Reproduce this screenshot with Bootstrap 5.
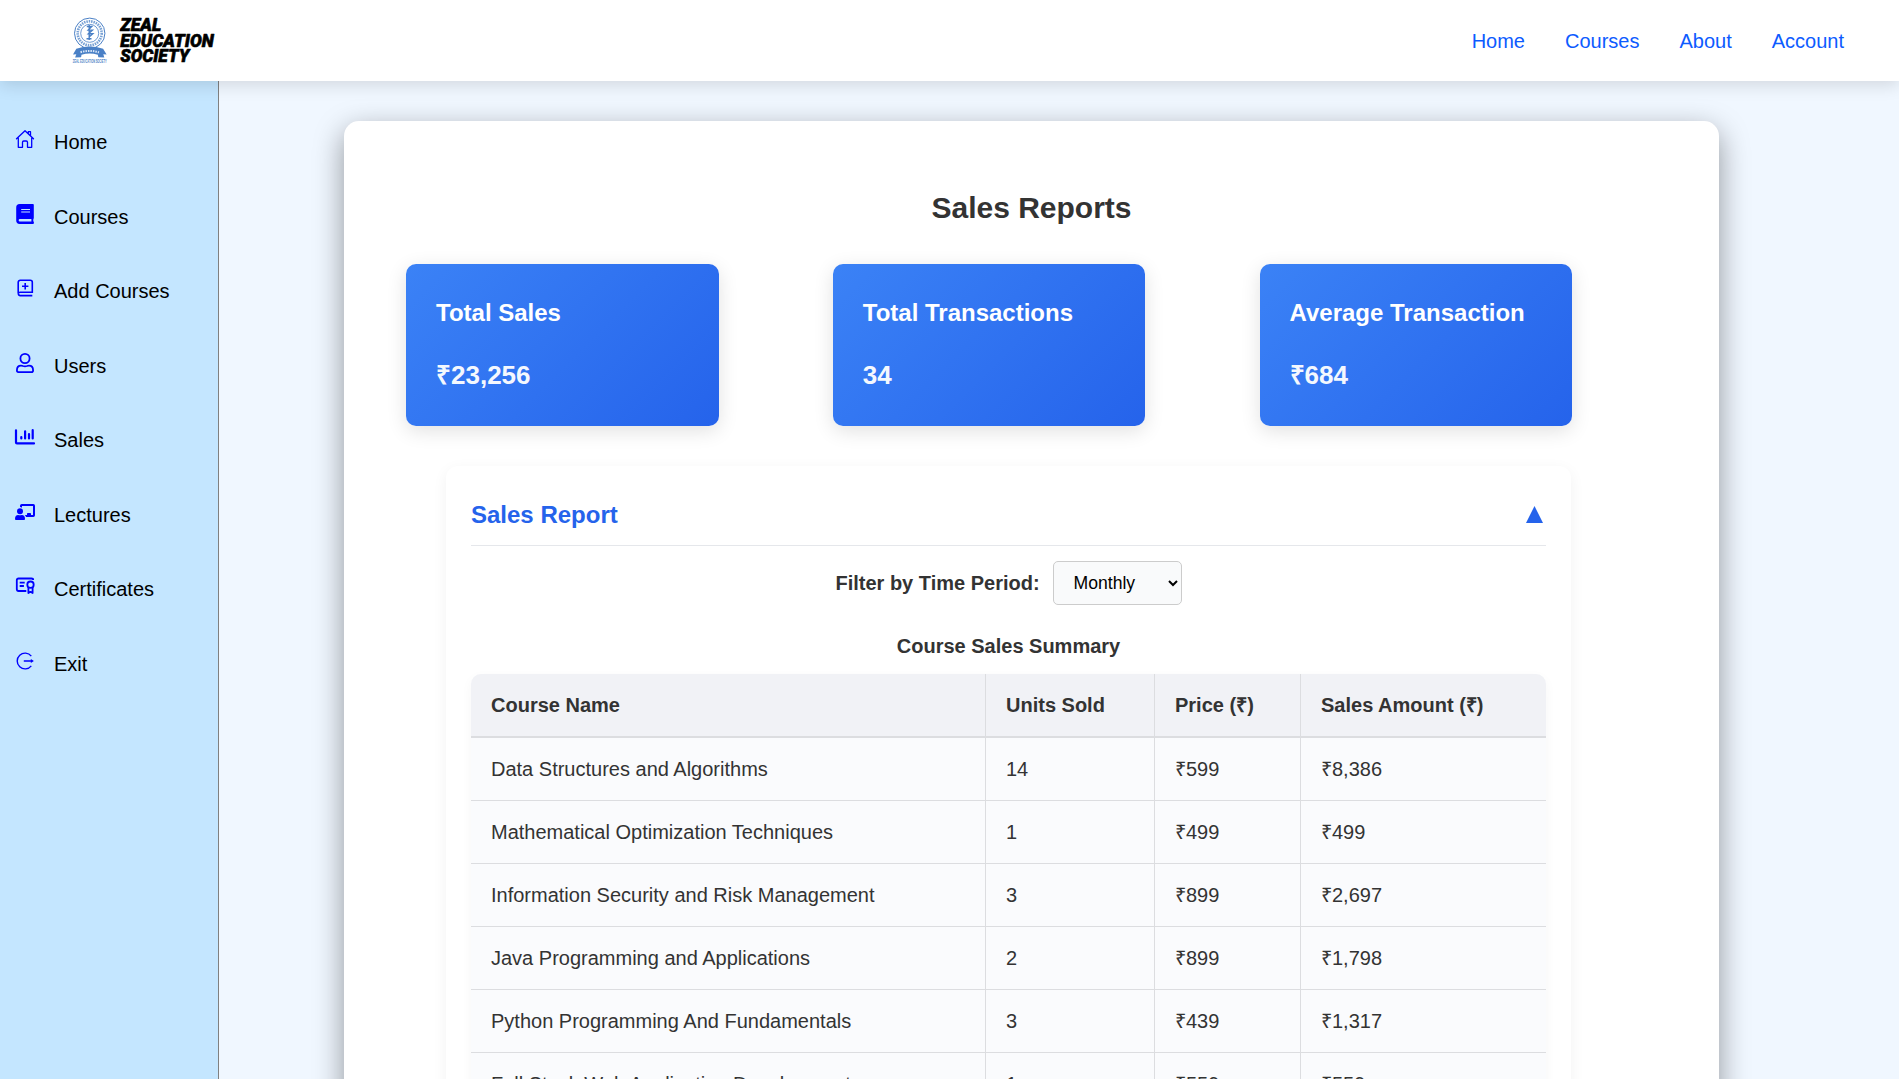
<!DOCTYPE html>
<html lang="en">
<head>
<meta charset="utf-8">
<meta name="viewport" content="width=device-width, initial-scale=1">
<title>Sales Reports</title>
<link href="https://cdn.jsdelivr.net/npm/bootstrap@5.3.0/dist/css/bootstrap.min.css" rel="stylesheet">
<style>
  body { font-family: "Liberation Sans", Arial, sans-serif; font-size: 20px; color: #333; background: #f0f7ff; height: 100vh; overflow: hidden; }
  .top-bar { height: 81px; padding: 0 55px 0 70px; box-shadow: 0 4px 16px rgba(0,0,0,.13); z-index: 5; }
  .top-links { gap: 40px; }
  .top-links .nav-link { color: #0d5bff; padding: 0; }
  .app-body { height: calc(100vh - 81px); overflow: hidden; }
  .side-menu { width: 219px; background: #c4e6ff; border-right: 1px solid #808080; padding-top: 23.8px; }
  .side-menu .nav-link { height: 74.55px; color: #000; padding: 0 0 0 15px; gap: 19px; }
  .side-menu svg { width: 20px; height: 20px; margin-bottom: 6px; color: #00f; flex: none; overflow: visible; }
  .report-sheet { width: 1375px; margin: 40px 0 0 125px; height: 1300px; padding: 70px 147px 0 62px; border-radius: 15px; box-shadow: 0 10px 30px rgba(0,0,0,.4); }
  .sheet-title { font-size: 30px; line-height: 33px; font-weight: 700; padding-left: 85px; margin-bottom: 40px; }
  .stat-tile { width: 312.5px; height: 162px; padding: 34px 30px 0; border-radius: 10px; background: linear-gradient(135deg,#3b82f6,#2563eb); box-shadow: 0 5px 20px rgba(0,0,0,.12); }
  .stat-tile h3 { font-size: 24px; line-height: 30px; font-weight: 700; margin: 0 0 30px; }
  .stat-tile p { font-size: 26px; line-height: 34px; font-weight: 700; opacity: .95; margin: 0; }
  .report-panel { margin: 40px 1px 0 40px; padding: 25px; border-radius: 12px; box-shadow: 0 4px 15px rgba(0,0,0,.055); height: 900px; }
  .panel-head { height: 55px; color: #2563eb; border-bottom: 1px solid #e5e7eb; padding-bottom: 6px; }
  .panel-head h3 { font-size: 24px; font-weight: 700; line-height: 28px; margin: 0; }
  .arrow-up { width: 17px; height: 17px; margin: 0 3px 2px 0; display: block; }
  .filter-row { gap: 13px; margin-top: 15px; height: 44px; }
  .period-pick { height: 44px; width: 129px; font: 17.6px "Liberation Sans", Arial, sans-serif; background: #f9fafb; color: #000; border: 1px solid #ccc; border-radius: 5px; padding: 0 0 0 16px; }
  .summary-title { font-size: 20px; line-height: 24px; font-weight: 700; margin: 29px 0 16px; }
  .sales-wrap { border-radius: 10px; overflow: hidden; box-shadow: 0 4px 12px rgba(0,0,0,.04); }
  .sales-grid { table-layout: fixed; width: 1075px; border-collapse: separate; border-spacing: 0; background: #fafbfd; line-height: 30px; }
  .sales-grid th { height: 64px; background: #f1f2f6; border-bottom: 2px solid #dcdde0; padding: 0 20px; }
  .sales-grid td { height: 63px; border-bottom: 1px solid #dcdde0; padding: 0 20px; }
  .sales-grid th:not(:last-child), .sales-grid td:not(:last-child) { border-right: 1px solid #dcdde0; }
</style>
<script src="https://cdn.jsdelivr.net/npm/bootstrap@5.3.0/dist/js/bootstrap.bundle.min.js"></script>
</head>
<body>
<header class="top-bar bg-white d-flex justify-content-between align-items-center position-relative">
  <svg width="150" height="54" viewBox="0 0 150 54" aria-label="Zeal Education Society">
    <g fill="none" stroke="#4a80c6">
      <circle cx="19.7" cy="19.3" r="15.2" stroke-width="1"/>
      <circle cx="19.7" cy="19.3" r="12" stroke-width="2.6" stroke-dasharray="1.5 .9" opacity=".75"/>
      <circle cx="19.7" cy="19.3" r="9" stroke-width=".8"/>
      <path d="M16.8 12.5h5l-3.6 3.6h4.2l-4 3.6h4.4l-4 3.6M19.2 11v15M16.5 24.8h5" stroke-width="1.4"/>
    </g>
    <path d="M3 40.5l3.3-5.8q13.4-4.3 26.8 0l3.5 5.8-3.3-.2 1 3.1-6-.2-.4-2.4q-8.2-2.4-16.4 0l-.4 2.4-6 .2 1.2-3.1z" fill="#4a80c6"/>
    <path d="M10.5 38.2q9.2-2.5 18.5 0" fill="none" stroke="#d7e5f8" stroke-width="2" stroke-dasharray="1.5 1"/>
    <text x="2.8" y="49.4" font-size="4.8" font-weight="700" fill="#4a80c6" textLength="34" lengthAdjust="spacingAndGlyphs">ZEAL EDUCATION SOCIETY</text>
    <g font-family="Roboto, sans-serif" font-size="17.6" font-weight="900" font-style="italic" fill="#000" stroke="#000" stroke-width=".6" stroke-linejoin="round">
      <text x="50.2" y="17.3" textLength="41" lengthAdjust="spacingAndGlyphs">ZEAL</text>
      <text x="50.2" y="32.9" textLength="93.5" lengthAdjust="spacingAndGlyphs">EDUCATION</text>
      <text x="50.2" y="48.2" textLength="69" lengthAdjust="spacingAndGlyphs">SOCIETY</text>
    </g>
  </svg>
  <nav class="nav top-links">
    <a class="nav-link" href="#">Home</a><a class="nav-link" href="#">Courses</a><a class="nav-link" href="#">About</a><a class="nav-link" href="#">Account</a>
  </nav>
</header>
<div class="app-body d-flex">
  <nav class="side-menu nav flex-column flex-nowrap flex-shrink-0">
    <a class="nav-link d-flex align-items-center" href="#"><svg viewBox="0 0 20 20" fill="none" stroke="currentColor" stroke-width="1.3" stroke-linecap="round" stroke-linejoin="round"><path d="M1.5 9.8L10 1.7l8.5 8.1M3.3 8.8v9.5h4.2v-5q0-1.3 1.3-1.3h2.4q1.3 0 1.3 1.3v5h4.2V8.8M13.3 4.5V2.7h2.2v4"/></svg>Home</a>
    <a class="nav-link d-flex align-items-center" href="#"><svg viewBox="0 0 20 20" fill="currentColor"><path fill-rule="evenodd" d="M4.7 0H18q.8 0 .8.9v13.2q0 .5-.4.8-.3 1.2 0 2.5.5.2.5.8v.9q0 .9-.9.9H4.7A3.6 3.6 0 0 1 1.2 16.3V3.7A3.6 3.6 0 0 1 4.7 0zM4.9 15a1.25 1.25 0 0 0 0 2.5h11.5V15zM6.2 5v1.1h8.8V5zm0 2.5v1.1h8.8V7.5z"/></svg>Courses</a>
    <a class="nav-link d-flex align-items-center" href="#"><svg viewBox="0 0 20 20" fill="none" stroke="currentColor" stroke-width="1.6"><path d="M17.3 17.6H5a2 2 0 0 1-1.8-2V4.3a2 2 0 0 1 2-2h10.1a2 2 0 0 1 2 2v9.9H5.1a1.9 1.9 0 0 0-1.9 1.7M10.2 5v6.4M7 8.2h6.4"/></svg>Add Courses</a>
    <a class="nav-link d-flex align-items-center" href="#"><svg viewBox="0 0 20 20" fill="none" stroke="currentColor" stroke-width="1.8"><circle cx="10" cy="5.5" r="4.6"/><path d="M6 12.7q1.3 0 2 .3 2 .6 4 0 .7-.3 2-.3 4 0 4.1 4.5 0 1.9-1.5 1.9H3.4q-1.5 0-1.5-1.9Q2 12.7 6 12.7z"/></svg>Users</a>
    <a class="nav-link d-flex align-items-center" href="#"><svg viewBox="0 0 20 20" fill="none" stroke="currentColor" stroke-width="2.2"><path stroke-linecap="round" stroke-linejoin="round" d="M1 3.3v12.2q0 .9.9.9H19"/><path stroke-linecap="round" d="M6.3 10v1.4M10.1 4.3v7.1M14 7v4.4M17.7 3.2v8.2"/></svg>Sales</a>
    <a class="nav-link d-flex align-items-center" href="#"><svg viewBox="0 0 20 20" fill="currentColor"><circle cx="5" cy="9.2" r="3"/><path d="M0 17q0-4 3.2-4 1.8.7 3.6 0Q10 13 10 17q0 1-.9 1H.9Q0 18 0 17zM5 5V3.7Q5 2 6.7 2h11.6Q20 2 20 3.7v9.6q0 1.7-1.7 1.7h-7.2q-.4-1.2-1.3-2H12v-1.2q0-.8.8-.8h2.4q.8 0 .8.8V13h2V4H7v1.7Q6 5 5 5z"/></svg>Lectures</a>
    <a class="nav-link d-flex align-items-center" href="#"><svg viewBox="0 0 20 20" fill="none" stroke="currentColor" stroke-width="1.8" stroke-linejoin="round"><path d="M11.3 15H3.5q-1.7 0-1.7-1.7V4q0-1.5 1.7-1.5h13q1.7 0 1.7 1.5M4.7 6.6h5M4.7 10h4.2"/><circle cx="15.5" cy="8.7" r="3.2"/><path d="M13.4 11.3V17l2.1-1.2 2.1 1.2v-5.7"/></svg>Certificates</a>
    <a class="nav-link d-flex align-items-center" href="#"><svg viewBox="0 0 20 20" fill="none" stroke="currentColor" stroke-width="1.4"><path d="M16.3 5.1A7.9 7.9 0 1 0 16.3 14.9M8.8 10h8"/><path d="M15.8 7.9L18.9 10l-3.1 2.1z" fill="currentColor" stroke="none"/></svg>Exit</a>
  </nav>
  <main>
    <section class="report-sheet bg-white">
      <h2 class="sheet-title text-center">Sales Reports</h2>
      <div class="d-flex justify-content-between">
        <div class="stat-tile text-white"><h3>Total Sales</h3><p>₹23,256</p></div>
        <div class="stat-tile text-white"><h3>Total Transactions</h3><p>34</p></div>
        <div class="stat-tile text-white"><h3>Average Transaction</h3><p>₹684</p></div>
      </div>
      <div class="report-panel">
        <div class="panel-head d-flex justify-content-between align-items-center">
          <h3>Sales Report</h3>
          <svg class="arrow-up" viewBox="0 0 17 17"><path d="M8.5 0L17 17H0z" fill="#2563eb"/></svg>
        </div>
        <div class="filter-row d-flex justify-content-center align-items-center">
          <label class="fw-bold" for="period">Filter by Time Period:</label>
          <select class="period-pick" id="period"><option>Monthly</option></select>
        </div>
        <h4 class="summary-title text-center">Course Sales Summary</h4>
        <div class="sales-wrap">
          <table class="sales-grid">
            <colgroup><col style="width:515px"><col style="width:169px"><col style="width:146px"><col></colgroup>
            <thead><tr><th>Course Name</th><th>Units Sold</th><th>Price (₹)</th><th>Sales Amount (₹)</th></tr></thead>
            <tbody>
              <tr><td>Data Structures and Algorithms</td><td>14</td><td>₹599</td><td>₹8,386</td></tr>
              <tr><td>Mathematical Optimization Techniques</td><td>1</td><td>₹499</td><td>₹499</td></tr>
              <tr><td>Information Security and Risk Management</td><td>3</td><td>₹899</td><td>₹2,697</td></tr>
              <tr><td>Java Programming and Applications</td><td>2</td><td>₹899</td><td>₹1,798</td></tr>
              <tr><td>Python Programming And Fundamentals</td><td>3</td><td>₹439</td><td>₹1,317</td></tr>
              <tr><td>Full Stack Web Application Development</td><td>1</td><td>₹559</td><td>₹559</td></tr>
            </tbody>
          </table>
        </div>
      </div>
    </section>
  </main>
</div>
</body>
</html>
